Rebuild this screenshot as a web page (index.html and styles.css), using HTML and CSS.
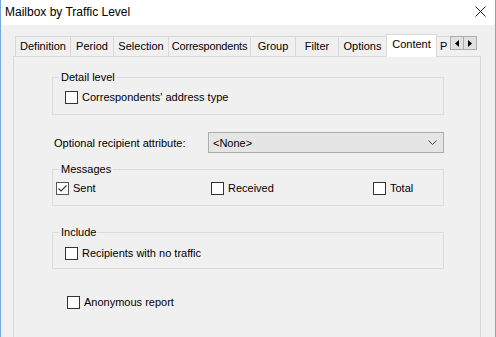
FILE: index.html
```html
<!DOCTYPE html>
<html lang="en">
  <head>
    <title>Mailbox by Traffic Level</title>
    <meta charset="UTF-8" />
    <meta name="viewport" content="width=device-width, initial-scale=1.0" />
    <link rel="stylesheet" href="styles.css">
  </head>
  <body>
    <div class="window">
      <div class="titlebar">
        <span class="title">Mailbox by Traffic Level</span>
        <svg class="close" width="11" height="11" viewBox="0 0 11 11">
          <path d="M0.5 0.5 L10.5 10.5 M10.5 0.5 L0.5 10.5" stroke="#222" stroke-width="1" fill="none" />
        </svg>
      </div>

      <div class="tabs">
        <div class="tab tab-definition">Definition</div>
        <div class="tab tab-period">Period</div>
        <div class="tab tab-selection">Selection</div>
        <div class="tab tab-corr">Correspondents</div>
        <div class="tab tab-group">Group</div>
        <div class="tab tab-filter">Filter</div>
        <div class="tab tab-options">Options</div>
        <div class="tab tab-content selected">Content</div>
        <div class="tab tab-more">P</div>
        <div class="scroller">
          <div class="arrow">
            <svg width="4" height="7" viewBox="0 0 4 7"><path d="M4 0 L0 3.5 L4 7 Z" fill="#000" /></svg>
          </div>
          <div class="arrow">
            <svg width="4" height="7" viewBox="0 0 4 7"><path d="M0 0 L4 3.5 L0 7 Z" fill="#000" /></svg>
          </div>
        </div>
      </div>

      <div class="panel">
        <!-- detail level -->
        <div class="group group-detail">
          <div class="group-title">Detail level</div>
          <label class="check check-detail">
            <span class="box"></span>
            <span>Correspondents' address type</span>
          </label>
        </div>

        <div class="attr-row">
          <span class="attr-label">Optional recipient attribute:</span>
          <div class="select">
            <span>&lt;None&gt;</span>
            <svg width="9" height="5" viewBox="0 0 9 5">
              <path d="M0.5 0.5 L4.5 4.5 L8.5 0.5" stroke="#444" stroke-width="1" fill="none" />
            </svg>
          </div>
        </div>

        <!-- messages -->
        <div class="group group-messages">
          <div class="group-title">Messages</div>
          <div class="check-row">
            <label class="check check-sent">
              <span class="box">
                <svg width="11" height="11" viewBox="0 0 11 11">
                  <path d="M1.5 5.5 L4 8 L9.5 2.5" stroke="#333" stroke-width="1.1" fill="none" />
                </svg>
              </span>
              <span>Sent</span>
            </label>
            <label class="check check-received">
              <span class="box"></span>
              <span>Received</span>
            </label>
            <label class="check">
              <span class="box"></span>
              <span>Total</span>
            </label>
          </div>
        </div>

        <!-- include -->
        <div class="group group-include">
          <div class="group-title">Include</div>
          <label class="check check-include">
            <span class="box"></span>
            <span>Recipients with no traffic</span>
          </label>
        </div>

        <label class="check check-anon">
          <span class="box"></span>
          <span>Anonymous report</span>
        </label>
      </div>
    </div>
  </body>
</html>
```

FILE: styles.css
```css
html,
body {
  margin: 0;
  padding: 0;
  background-color: #f0f0f0;
  font-family: "Liberation Sans", Arial, sans-serif;
  font-size: 11px;
  color: #000;
}

.window {
  width: 496px;
  height: 337px;
  box-sizing: border-box;
  border-left: 1px solid #74a9dc;
  border-right: 1px solid #74a9dc;
  background-color: #f0f0f0;
  overflow: hidden;
}

.titlebar {
  height: 25px;
  background-color: #fff;
  display: flex;
  align-items: center;
  justify-content: space-between;
  padding: 0 9px 0 4px;
}

.title {
  font-size: 12px;
  line-height: 15px;
  margin-top: -1px;
}

.close {
  display: block;
  margin-top: -2px;
}

/* tab strip */
.tabs {
  display: flex;
  align-items: flex-end;
  height: 22px;
  margin-top: 9px;
  padding-left: 14px;
}

.tab {
  box-sizing: border-box;
  height: 20px;
  border: 1px solid #d9d9d9;
  border-bottom: none;
  margin-left: -1px;
  text-align: center;
  line-height: 18px;
  white-space: nowrap;
  overflow: hidden;
  background-color: #f0f0f0;
}

.tab:first-child {
  margin-left: 0;
}

.tab-definition { width: 56px; }
.tab-period { width: 44px; }
.tab-selection { width: 56px; }
.tab-corr { width: 83px; letter-spacing: -0.2px; }
.tab-group { width: 46px; }
.tab-filter { width: 44px; }
.tab-options { width: 49px; }

.tab.selected {
  width: 51px;
  height: 23px;
  line-height: 19px;
  background-color: #fff;
  margin-bottom: -1px;
}

.tab-more {
  width: 14px;
  text-align: left;
  padding-left: 3px;
  border-right: none;
}

.scroller {
  display: flex;
  align-self: flex-start;
  margin-top: 2px;
}

.arrow {
  box-sizing: border-box;
  width: 14px;
  height: 14px;
  border: 1px solid #adadad;
  background-color: #e1e1e1;
  display: flex;
  align-items: center;
  justify-content: center;
}

.arrow + .arrow {
  margin-left: -1px;
}

.arrow svg {
  display: block;
}

/* tab page */
.panel {
  box-sizing: border-box;
  width: 468px;
  height: 290px;
  margin-left: 12px;
  border: 1px solid #d9d9d9;
  border-bottom: none;
  padding-top: 20px;
}

.group {
  box-sizing: border-box;
  width: 392px;
  margin-left: 38px;
  border: 1px solid #dcdcdc;
}

.group-title {
  display: table;
  height: 14px;
  line-height: 14px;
  margin: -8px 0 0 6px;
  padding: 0 2px;
  background-color: #f0f0f0;
}

.group-detail {
  height: 38px;
}

.group-messages {
  height: 37px;
  margin-top: 16px;
}

.group-include {
  height: 37px;
  margin-top: 26px;
}

.check {
  display: flex;
  align-items: center;
  height: 13px;
  line-height: 13px;
  white-space: nowrap;
}

.box {
  box-sizing: border-box;
  width: 13px;
  height: 13px;
  border: 1px solid #333;
  background-color: #fff;
  margin-right: 4px;
  flex-shrink: 0;
}

.box svg {
  display: block;
}

.check-detail {
  margin: 7px 0 0 12px;
}

.check-row {
  display: flex;
  margin: 6px 0 0 3px;
}

.check-sent {
  width: 155px;
}

.check-sent .box {
  border-color: #555;
}

.check-received {
  width: 162px;
}

.check-include {
  margin: 8px 0 0 12px;
}

.check-anon {
  margin: 27px 0 0 53px;
}

.attr-row {
  display: flex;
  align-items: center;
  margin: 17px 0 0 40px;
}

.attr-label {
  width: 154px;
}

.select {
  box-sizing: border-box;
  width: 236px;
  height: 21px;
  border: 1px solid #adadad;
  background-color: #e5e5e5;
  display: flex;
  align-items: center;
  justify-content: space-between;
  padding: 0 6px 0 4px;
}

.select svg {
  display: block;
}
```
